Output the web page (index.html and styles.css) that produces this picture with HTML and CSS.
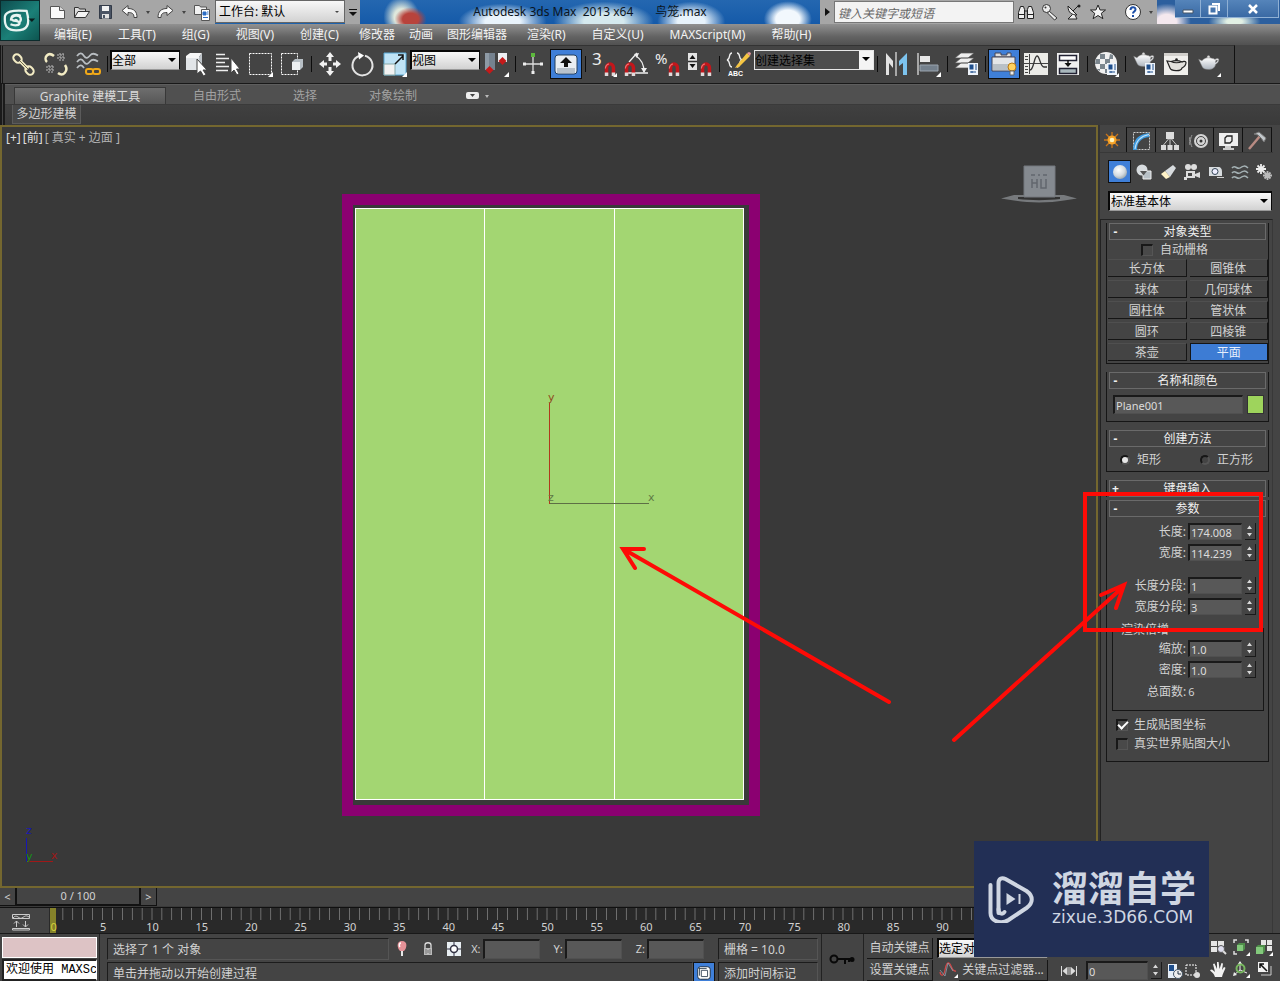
FILE: index.html
```html
<!DOCTYPE html>
<html lang="zh-CN">
<head>
<meta charset="utf-8">
<title>Autodesk 3ds Max 2013 x64 鸟笼.max</title>
<link rel="stylesheet" href="styles.css">
</head>
<body>
<svg class="defs" aria-hidden="true">
  <defs>
    <linearGradient id="metal" x1="0" y1="0" x2="0" y2="1"><stop offset="0" stop-color="#fff"/><stop offset="1" stop-color="#aeb6c0"/></linearGradient>
    <radialGradient id="ball" cx=".4" cy=".35" r=".7"><stop offset="0" stop-color="#fff"/><stop offset=".6" stop-color="#d4dbe0"/><stop offset="1" stop-color="#98a4ac"/></radialGradient>
    <symbol id="magnet" viewBox="0 0 12 13"><path d="M3 12.500V6a3 3.500 0 0 1 6 0v6.500" fill="none" stroke="#c3161b" stroke-width="3"/><path d="M3 13v-3M9 13v-3" stroke="#dcdcdc" stroke-width="3"/><path d="M2 6.500a4.400 4.400 0 0 1 3-4" fill="none" stroke="#f07070"/></symbol>
    <symbol id="corner" viewBox="0 0 5 5"><path d="M5 0v5H0z" fill="#fff"/></symbol>
    <symbol id="teapot" viewBox="0 0 24 16"><path d="M5 6 1.500 4.500 5 12c1 2.500 3 3.500 7 3.500s7-2 7.500-5.500c2-1 3.500-3 3.500-5 0-1.500-3-1.500-4-.3C17 3.500 14 3 12 3S7 3.500 5 6zm14.500 2c0-2 .5-2.800 1.600-2.800 1 0 0 2.300-1.600 2.800z" fill="url(#metal)" stroke="#777" stroke-width=".5"/><path d="M9 3.500c1-1 5-1 6 0z" fill="#ddd"/><circle cx="12" cy="1.700" r="1.300" fill="#ddd"/></symbol>
    <symbol id="dialog" viewBox="0 0 10 12"><path d="M0 0h10v12H0z" fill="#eef4fb"/><path d="M1.500 1.500h4v5h-4z" fill="#1e4e8c"/><path d="M7 2h2M7 4h2M7 6h2M2 9h6M4 8v2" stroke="#1e4e8c"/></symbol>
    <symbol id="updown" viewBox="0 0 9 15"><path d="M4.500 2 7 5.500H2zM4.500 13 7 9.500H2z" fill="#d8d8d8"/></symbol>
  </defs>
</svg>

<header class="header">
  <button class="logo" aria-label="应用程序">
    <svg viewBox="0 0 40 41"><path d="M4 19C3 11 12 9 27 10.500 31 25 28 31 16 31 7 31 4 27 4 19z" fill="none" stroke="#e8f4f2" stroke-width="2.400"/><path d="M21 15.500c-6-2-10.500 0-10 3.500.5 3 8 1 8.500 4 .4 2.500-4.500 3.500-9.500 1.500M18.500 23c4-3 3-8-3-7.500-3 .4-5.500 2.500-5 5M14.500 20.500c1.500-1.500 3 0 2 1.700" fill="none" stroke="#e8f4f2" stroke-width="2.400"/><path d="M29 18.500h7L32.500 22z" fill="#0a1c1c"/></svg>
  </button>
  <div class="header-rows">
    <div class="titlebar">
      <div class="quick">
        <button aria-label="新建"><svg viewBox="0 0 18 18"><path d="M1.500 3.500h9l5 4v8h-14z" fill="#fafafa" stroke="#555"/><path d="M10.500 3.500v4h5" fill="#ddd" stroke="#555"/></svg></button>
        <button aria-label="打开"><svg viewBox="0 0 18 18"><path d="M1.500 14.500v-10h4l1 1.500h6v2.500" fill="#ddd" stroke="#333"/><path d="M1.500 14.500 5 8.500h11.500l-4 6z" fill="#f4f4f4" stroke="#333"/></svg></button>
        <button aria-label="保存"><svg viewBox="0 0 18 18"><path d="M2.500 2.500h12v13h-12z" fill="#4a5464" stroke="#333b48"/><path d="M5 3h7v5H5z" fill="#f2f2f2"/><path d="M5 11h7v4.500H5z" fill="#e2e2e2"/><path d="M6 12h2v3H6z" fill="#4a5464"/></svg></button>
        <button aria-label="撤消"><svg viewBox="0 0 18 18"><path d="M1 7.500 7 2.500v3c6 0 9 3 9 9h-3c0-4-2-5-6-5v3z" fill="#fafafa" stroke="#444"/></svg></button>
        <i class="drop"></i>
        <button aria-label="重做"><svg viewBox="0 0 18 18"><path d="M16 7.500 10 2.500v3c-6 0-9 3-9 9h3c0-4 2-5 6-5v3z" fill="#fafafa" stroke="#444"/></svg></button>
        <i class="drop"></i>
        <button aria-label="项目"><svg viewBox="0 0 18 18"><path d="M1.500 11.500v-9h5l1 1.500h6v7.500z" fill="#f2f2f2" stroke="#555"/><path d="M8.500 6.500h8v11h-8z" fill="#fff" stroke="#555"/><path d="M10 9h3v3h-3zM14 9h1.500M14 11h1.500M10 14.500h5" stroke="#2b6cc4" fill="#2b6cc4"/></svg></button>
      </div>
      <label class="pick pick-workspace"><select aria-label="工作台"><option>工作台: 默认</option></select></label>
      <button class="more" aria-label="更多"></button>
      <h1 class="doc-title">Autodesk 3ds Max  2013 x64       鸟笼.max</h1>
      <div class="infocenter">
        <i class="play"></i>
        <input class="search" type="text" placeholder="键入关键字或短语" aria-label="搜索">
        <button aria-label="查找"><svg viewBox="0 0 18 18"><path d="M3.500 3.500h3l1 3v9H1.500v-6zM11.500 3.500h3l2 6v6h-6v-9z" fill="#eee" stroke="#222"/><path d="M7.500 8h3M1.500 11.500h6M10.500 11.500h6" stroke="#222"/></svg></button>
        <button aria-label="密钥"><svg viewBox="0 0 18 18"><path d="m8 8 8 7-2.500 2-7-7z" fill="#eee" stroke="#333"/><circle cx="5.500" cy="5.500" r="4" fill="#eee" stroke="#333"/><circle cx="4.500" cy="4.500" r="1" fill="#333"/></svg></button>
        <button aria-label="通讯中心"><svg viewBox="0 0 18 18"><path d="M3 3c0 7 4 9 9 9z" fill="#eee" stroke="#222"/><path d="m8 8 6-6M7 12l-4 4h9l-2-4" fill="#eee" stroke="#222"/><circle cx="14" cy="3" r="1.500" fill="#222"/></svg></button>
        <button aria-label="收藏夹"><svg viewBox="0 0 18 18"><path d="m9 2 2.100 5h5.400l-4.200 3.300 1.600 5.400L9 12.500l-4.900 3.200 1.600-5.400L1.500 7h5.400z" fill="#f4f4f4" stroke="#222"/></svg></button>
        <button class="help" aria-label="帮助"><svg viewBox="0 0 18 18"><circle cx="9" cy="9" r="7.500" fill="#fff" stroke="#333"/><path d="M6.500 7c0-3.500 5-3.500 5-.5 0 2-2.500 2-2.500 4M9 12v2" fill="none" stroke="#1d4fa8" stroke-width="2"/></svg></button>
        <i class="drop"></i>
      </div>
      <div class="winctl">
        <button aria-label="最小化"><svg viewBox="0 0 16 14"><path d="M3 8h10v3H3z" fill="#fff" stroke="#456"/></svg></button>
        <button aria-label="还原"><svg viewBox="0 0 16 14"><path d="M6 2h7v7M3.500 4.500h7v7h-7z" fill="none" stroke="#fff" stroke-width="2"/></svg></button>
        <button class="close" aria-label="关闭"><svg viewBox="0 0 16 14"><path d="m4 3 8 8M12 3l-8 8" stroke="#fff" stroke-width="2.500"/></svg></button>
      </div>
    </div>
    <nav class="menubar">
      <a href="#">编辑(E)</a><a href="#">工具(T)</a><a href="#">组(G)</a><a href="#">视图(V)</a><a href="#">创建(C)</a><a class="tight" href="#">修改器</a><a class="tight" href="#">动画</a><a class="tight" href="#">图形编辑器</a><a href="#">渲染(R)</a><a href="#">自定义(U)</a><a href="#">MAXScript(M)</a><a href="#">帮助(H)</a>
    </nav>
  </div>
</header>

<div class="toolrow">
<div class="toolbar" role="toolbar" aria-label="主工具栏">
  <button class="tool" aria-label="选择并链接"><svg viewBox="0 0 26 26"><g fill="none" stroke="#f3ecc4" stroke-width="2"><rect x="2" y="4" width="9" height="7" rx="3.500" transform="rotate(45 6.500 7.500)"/><rect x="14" y="16" width="9" height="7" rx="3.500" transform="rotate(45 18.500 19.500)"/><path d="m9 10 8 8" stroke-width="3.500"/></g><path d="m9 10 8 8" stroke="#6d684e"/></svg></button>
  <button class="tool" aria-label="断开链接"><svg viewBox="0 0 26 26"><path d="M4 11C0 7 5 0 11 5M15 22c5 4 11-2 7-8" fill="none" stroke="#f3ecc4" stroke-width="2.500"/><g stroke="#bbb" stroke-dasharray="2 1"><path d="M14 4h7M14 7h8M17 2v8M20 2v8M3 16h8M3 19h8M6 14v8M9 14v8"/></g></svg></button>
  <button class="tool" aria-label="绑定到空间扭曲"><svg viewBox="0 0 26 26"><g fill="none" stroke="#b9bec2" stroke-width="1.800"><path d="M2 5c3-4 5-3 7 0s4 2 6-.5 5-2 8 0M2 11c3-4 5-3 7 0s4 2 6-.5 5-2 8 0M2 17c3-4 5-3 7 0"/></g><rect x="11" y="18" width="7" height="5" rx="2" fill="none" stroke="#f0a818" stroke-width="2"/><rect x="18" y="18" width="7" height="5" rx="2" fill="none" stroke="#f0a818" stroke-width="2"/></svg></button>
  <i class="sep"></i>
  <label class="pick pick-small"><select aria-label="选择过滤器"><option>全部</option></select></label>
  <button class="tool" aria-label="选择对象"><svg viewBox="0 0 26 26"><path d="m3 5 4-3h12l-3 4v13H3z" fill="#f7f7f7"/><path d="M16 6l3-4v13l-3 4z" fill="#bfc5ca"/><path d="M3 19V7h13v12z" fill="#e2e5e8"/><path d="M14 8v15l3.500-3 3 5 2.500-1.500-3-4.500h4z" fill="#fff" stroke="#444"/></svg></button>
  <button class="tool" aria-label="按名称选择"><svg viewBox="0 0 26 26"><path d="M1 3.500h9M1 7.500h13M1 11.500h9M1 15.500h13M1 19.500h12" stroke="#eee" stroke-width="1.300"/><path d="M16 7v15l3-3 3 5 2-1.500-2.500-4.500H25z" fill="#fff" stroke="#444"/></svg></button>
  <button class="tool" aria-label="矩形选择区域"><svg viewBox="0 0 26 26"><path d="M2.500 2.500h22v21h-22z" fill="none" stroke="#fff" stroke-dasharray="2 1"/><use href="#corner" x="21" y="21" width="5" height="5"/></svg></button>
  <button class="tool" aria-label="窗口/交叉"><svg viewBox="0 0 26 26"><path d="M2.500 2.500h16v21h-16z" fill="none" stroke="#fff" stroke-dasharray="2 1"/><path d="m13 11 3-3h8v8l-3 3h-8z" fill="#b8c0c6"/><path d="M13 11h8v8h-8z" fill="#eceff1"/></svg></button>
  <i class="sep"></i>
  <button class="tool" aria-label="移动"><svg viewBox="0 0 26 26"><path d="m13 1 4 5H9zM13 25l4-5H9zM2 13l5-4v8zM24 13l-5-4v8z" fill="#f2f2f2"/><path d="M13 6v4M13 16v4M7 13h3M16 13h3" stroke="#f2f2f2" stroke-width="3"/></svg></button>
  <button class="tool" aria-label="旋转"><svg viewBox="0 0 26 26"><path d="M10 5a10 10 0 1 0 6-.3" fill="none" stroke="#e4e4e4" stroke-width="2"/><path d="m9 1 6 3.500-5 4z" fill="#fff"/></svg></button>
  <button class="tool" aria-label="缩放"><svg viewBox="0 0 26 26"><path d="M3 2h22v22H3z" fill="#bfe3f6" stroke="#59a8d4"/><path d="M3 13h11v11H3z" fill="#f2f2f2" stroke="#8aa"/><path d="m14 13 8-8M17 4h5v5" fill="none" stroke="#111" stroke-width="1.500"/><use href="#corner" x="21" y="21" width="5" height="5"/></svg></button>
  <label class="pick pick-small"><select aria-label="参考坐标系"><option>视图</option></select></label>
  <button class="tool" aria-label="使用轴点中心"><svg viewBox="0 0 26 26"><path d="M2 2h10v17H2z" fill="#75828f"/><path d="M2 2h4v17H2z" fill="#8e9aa5"/><path d="M15 2h9v9h-9z" fill="#eceff2"/><path d="m6.500 15 4 4-4 4-4-4zM19.500 6l4 4-4 4-4-4z" fill="#c41a1a"/><use href="#corner" x="21" y="21" width="5" height="5"/></svg></button>
  <i class="sep"></i>
  <button class="tool" aria-label="选择并操纵"><svg viewBox="0 0 26 26"><path d="M12 6v14M4 13h16" stroke="#ddd" stroke-width="1.300"/><path d="M10 2h4v4h-4z" fill="#5cb83c"/><path d="M2 11.500h3v3H2zM19 11.500h3v3h-3zM10.500 20h3v3h-3z" fill="#eee"/></svg></button>
  <button class="tool tool-on" aria-label="键盘快捷键覆盖切换"><svg viewBox="0 0 26 26"><rect x="2" y="4" width="22" height="19" rx="3" fill="#e9eef3" stroke="#24405f"/><path d="M4 17h18v5H4z" fill="#b8c2cc"/><path d="m13 6 6 6h-4v4h-4v-4H7z" fill="#111"/></svg></button>
  <i class="sep"></i>
  <button class="tool" aria-label="捕捉开关"><svg viewBox="0 0 26 26"><text class="t-snap" x="1" y="14">3</text><use href="#magnet" x="12" y="10" width="14" height="15"/><use href="#corner" x="22" y="22" width="4" height="4"/></svg></button>
  <button class="tool" aria-label="角度捕捉"><svg viewBox="0 0 26 26"><path d="M3 22h22M6 11l8-9M13 5c5 3 8 8 8 16" fill="none" stroke="#eee" stroke-width="1.300"/><path d="m11 3 5-1-2 5zM18 17l6 0-3 5z" fill="#eee"/><use href="#magnet" x="0" y="10" width="14" height="15"/></svg></button>
  <button class="tool" aria-label="百分比捕捉"><svg viewBox="0 0 26 26"><text class="t-snap t-pct" x="0" y="13">%</text><use href="#magnet" x="12" y="10" width="14" height="15"/></svg></button>
  <button class="tool" aria-label="微调器捕捉"><svg viewBox="0 0 26 26"><path d="M1 2h9v17H1z" fill="#e4e4e4"/><path d="M1 10.500h9" stroke="#333" stroke-width="1.500"/><path d="m5.500 4 3 4h-6zM5.500 17l3-4h-6z" fill="#111"/><use href="#magnet" x="12" y="10" width="14" height="15"/></svg></button>
  <i class="sep"></i>
  <button class="tool" aria-label="编辑命名选择集"><svg viewBox="0 0 26 26"><path d="M7 2C3 2 6 8 2 9c4 1 1 7 5 7M12 2c4 0 1 6 5 7-4 1-1 7-5 7" fill="none" stroke="#eee" stroke-width="1.300"/><path d="M12 14 22 2l3 3-11 11-4 1z" fill="#f5c542"/><path d="m22 2 3 3 1-3-2-1z" fill="#e89aa0"/><text class="t-abc" x="3" y="25">ABC</text></svg></button>
  <label class="pick pick-set"><select aria-label="命名选择集"><option>创建选择集</option></select></label>
  <i class="sep"></i>
  <button class="tool" aria-label="镜像"><svg viewBox="0 0 26 26"><path d="M3 2v22h3V12l4 5V10z" fill="#e2e2e2"/><path d="M24 2v22h-4V12l-4 3v-5z" fill="#7cc3ee"/><path d="M13 1v24" stroke="#ddd" stroke-width="1.300"/></svg></button>
  <button class="tool" aria-label="对齐"><svg viewBox="0 0 26 26"><path d="M3 2v22" stroke="#ddd" stroke-width="1.300"/><path d="M5 5h10v6H5z" fill="#e8e8e8"/><path d="M5 14h18v6H5z" fill="#74808c" stroke="#9aa4ae"/><use href="#corner" x="21" y="21" width="5" height="5"/></svg></button>
  <i class="sep"></i>
  <button class="tool" aria-label="层管理器"><svg viewBox="0 0 26 26"><path d="M2 17 8 12h13l-6 5zM2 12l6-5h13l-6 5zM2 7l6-5h13l-6 5z" fill="#eee" stroke="#555" stroke-width=".7"/><use href="#dialog" x="15" y="12" width="10" height="12"/></svg></button>
  <i class="sep"></i>
  <button class="tool tool-on" aria-label="Graphite 建模工具"><svg viewBox="0 0 26 26"><path d="M4 2h6v2h6V2h4v4H4z" fill="#ddd" stroke="#445"/><path d="M1 6h23v14H1z" fill="#e4e6e8" stroke="#445"/><path d="M2 13h21v6H2z" fill="#b9c0c6"/><circle cx="21" cy="16" r="4" fill="#ffd25e" stroke="#b87812"/><path d="M19 20h4v4h-4z" fill="#eee" stroke="#666"/></svg></button>
  <button class="tool" aria-label="曲线编辑器"><svg viewBox="0 0 26 26"><path d="M1 2h24v22H1z" fill="#ecece8"/><path d="M6.500 3v20M1 12.500h24M2 5.500h3M2 8.500h3M2 15.500h3M2 18.500h3M2 21.500h3" stroke="#444"/><path d="M7 19c4 0 4-14 7-14s3 11 7 11h3" fill="none" stroke="#333" stroke-width="1.300"/></svg></button>
  <button class="tool" aria-label="图解视图"><svg viewBox="0 0 26 26"><path d="M2 2h22v22H2z" fill="#f0f0f0"/><path d="M4.500 4.500h17v5h-17z" fill="#fff" stroke="#223" stroke-width="1.500"/><path d="M4.500 17.500h17v5h-17z" fill="#a9b8bd" stroke="#223" stroke-width="1.500"/><path d="M13 9v4" stroke="#111" stroke-width="1.500"/><path d="M9.500 12h7L13 16z" fill="#111"/></svg></button>
  <i class="sep"></i>
  <button class="tool" aria-label="材质编辑器"><svg viewBox="0 0 26 26"><circle cx="13" cy="12" r="11" fill="#f1f1f1"/><path d="M7 3h5v5H7zM17 3l3 1v4h-4zM3 8h4v5H2zM12 8h5v5h-5zM7 13h5v5H7zM17 13h5v4h-5zM12 18h5v4h-5zM3 18h4v2z" fill="#7b868e"/><use href="#dialog" x="14" y="12" width="10" height="12"/><use href="#corner" x="22" y="22" width="4" height="4"/></svg></button>
  <i class="sep"></i>
  <button class="tool" aria-label="渲染设置"><svg viewBox="0 0 26 26"><use href="#teapot" x="1" y="1" width="23" height="15"/><use href="#dialog" x="14" y="12" width="10" height="12"/></svg></button>
  <button class="tool" aria-label="渲染帧窗口"><svg viewBox="0 0 26 26"><path d="M1 2h24v22H1z" fill="#f0efec"/><path d="M1 2h24v3H1z" fill="#d2d0cc"/><path d="M8 10.500 4 10l3 7c1 3 11 4 12 0 2-1 4-3 4-5.500 0-1.500-3-1.500-4-.5-3-1.500-8-1.500-11-.5zM8 10.500c3 1.500 8 1.500 11 0" fill="#e2e0dc" stroke="#222" stroke-width="1.200"/><circle cx="13.500" cy="8.500" r="1.300" fill="#222"/></svg></button>
  <button class="tool" aria-label="渲染产品"><svg viewBox="0 0 26 26"><use href="#teapot" x="2" y="4" width="23" height="15"/><use href="#corner" x="22" y="22" width="4" height="4"/></svg></button>
</div>
</div>

<section class="ribbon">
  <div class="ribbon-tabs">
    <button class="rtab rtab-on">Graphite 建模工具</button>
    <button class="rtab">自由形式</button>
    <button class="rtab rtab-short">选择</button>
    <button class="rtab">对象绘制</button>
    <button class="rmin" aria-label="最小化"><svg viewBox="0 0 26 10"><rect x="1" y="1" width="13" height="7" rx="2" fill="#eee"/><path d="M5 3h5L7.500 6z" fill="#444"/><path d="M20 4h4l-2 3z" fill="#bbb"/></svg></button>
  </div>
  <div class="ribbon-panel"><button class="rpanel">多边形建模</button></div>
</section>

<main class="main">
  <div class="work">
    <section class="viewport" aria-label="前视图">
      <svg class="scene" viewBox="0 0 1094 759">
        <rect x="345.500" y="72.500" width="407" height="611" fill="none" stroke="#8b0071" stroke-width="11"/>
        <rect x="353.500" y="81.500" width="388" height="591" fill="#a3d672" stroke="#fff"/>
        <path d="M482.500 82v590M612.500 82v590" stroke="#fff"/>
        <path d="M547 376.500h100" stroke="#5d6f45"/><path d="M547.500 276v101" stroke="#b03a1c"/>
        <text class="t-axis" x="546" y="274" fill="#8f4a20">y</text><text class="t-axis" x="546" y="374" fill="#5f7a45">z</text><text class="t-axis" x="646" y="374" fill="#5f7a45">x</text>
        <path d="M24.500 711v24" stroke="#1717b4"/><path d="M25 734.500h26" stroke="#a01818"/>
        <text class="t-axis" x="24" y="707" fill="#1717b4">z</text><text class="t-axis" x="24" y="733" fill="#189018">y</text><text class="t-axis" x="49" y="732" fill="#a01818">x</text>
      </svg>
      <p class="vlabel"><span>[+]</span><span>[前]</span><span class="dim">[ 真实 + 边面 ]</span></p>
      <svg class="cube" viewBox="0 0 78 38"><path d="M1 33.500 14 30h50l13 3.500-13 2C50 38 28 38 14 35.500z" fill="#777a7d"/><path d="M18 32h42v2c-12 1.500-30 1.500-42 0z" fill="#333"/><path d="M24 1h31v31H24z" fill="#858a90" stroke="#74797f"/><path d="M31 10h4M38 10h2M43 10h4M32 14v9M32 18h5M37 14v9M41 14v9h5v-9" fill="none" stroke="#62676d" stroke-width="1.500"/></svg>
    </section>
    <div class="slider">
      <button class="step" aria-label="上一帧">&lt;</button><button class="thumb">0 / 100</button><button class="step" aria-label="下一帧">&gt;</button>
    </div>
    <div class="track">
      <button class="mini" aria-label="迷你曲线编辑器"><svg viewBox="0 0 18 18"><path d="M.5 1.500h17v4H.5zM.5 15.500h17v1.500H.5z" fill="none" stroke="#ccc"/><path d="M1 5c4-5 6 2 9 0s4-3 7-1" fill="none" stroke="#ccc"/><path d="M4.500 14V8M2 10.500 4.500 8 7 10.500M13.500 8v6M11 11.500l2.500 2.500 2.500-2.500" fill="none" stroke="#ccc"/></svg></button>
      <ol class="frames">
        <li class="now">0</li><li>5</li><li>10</li><li>15</li><li>20</li><li>25</li><li>30</li><li>35</li><li>40</li><li>45</li><li>50</li><li>55</li><li>60</li><li>65</li><li>70</li><li>75</li><li>80</li><li>85</li><li>90</li><li>95</li><li>100</li>
      </ol>
    </div>
  </div>

  <aside class="panel">
    <div class="ptabs">
      <button class="ptab ptab-on" aria-label="创建"><svg viewBox="0 0 20 20"><path d="M10 2v16M2 10h16M4 4l12 12M16 4 4 16" stroke="#c9751c" stroke-width="1.300"/><circle cx="10" cy="10" r="4.500" fill="#f7a428"/><circle cx="10" cy="10" r="2.300" fill="#fff5c0"/></svg></button>
      <button class="ptab" aria-label="修改"><svg viewBox="0 0 20 20"><path d="M2.500 1.500h16v17h-16z" fill="none" stroke="#ccc" stroke-dasharray="2 1"/><path d="M4 19C4 10 9 5 18 4" fill="none" stroke="#3f9be0" stroke-width="4"/><path d="M4 18C5 10 10 5 18 3.500" fill="none" stroke="#bfe2fa" stroke-width="1.200"/></svg></button>
      <button class="ptab" aria-label="层次"><svg viewBox="0 0 20 20"><path d="M6 1h8v7H6zM1 14h5v5H1zM7.500 14h5v5h-5zM14 14h5v5h-5z" fill="#dcdcdc"/><path d="M10 8v6M3.500 14l5-6M16.500 14l-5-6" fill="none" stroke="#ccc"/></svg></button>
      <button class="ptab" aria-label="运动"><svg viewBox="0 0 20 20"><circle cx="12" cy="10" r="7" fill="#d5d5d5"/><circle cx="12" cy="10" r="4.500" fill="none" stroke="#444"/><circle cx="12" cy="10" r="1.500" fill="#333"/><path d="M3 4c-2 4-2 8 0 12M1 6c-1 3-1 6 0 8" fill="none" stroke="#999"/></svg></button>
      <button class="ptab" aria-label="显示"><svg viewBox="0 0 20 20"><path d="M1 2h19v13H1z" fill="#eee"/><path d="M7 15h6v2h3v2H5v-2h2z" fill="#ccc"/><path d="M7 7l2-2h5v5l-2 2H7z" fill="none" stroke="#222" stroke-width="1.300"/></svg></button>
      <button class="ptab" aria-label="工具"><svg viewBox="0 0 20 20"><path d="M13 5 2 18" stroke="#b98b83" stroke-width="2.500"/><path d="m7 3 5-2 7 6-2 4-3-4-3-3z" fill="#c3c8cc" stroke="#777"/></svg></button>
    </div>
    <div class="cats">
      <button class="cat cat-on" aria-label="几何体"><svg viewBox="0 0 18 18"><circle cx="9" cy="9" r="7" fill="url(#ball)"/></svg></button>
      <button class="cat" aria-label="图形"><svg viewBox="0 0 18 18"><circle cx="7" cy="7" r="5.500" fill="#d8dcdf"/><path d="M8 8h8v8H8z" fill="#b8c0c6" stroke="#eee"/><path d="m5 8 7 0-3.500 4.500z" fill="#555"/></svg></button>
      <button class="cat" aria-label="灯光"><svg viewBox="0 0 18 18"><path d="M14 2 6 8l5 6 6-9z" fill="#d8dcdf"/><path d="m6 8-4 3 5 5 4-2z" fill="#fff3c8"/></svg></button>
      <button class="cat" aria-label="摄影机"><svg viewBox="0 0 18 18"><circle cx="5" cy="4" r="3" fill="#ddd"/><circle cx="11" cy="4" r="3" fill="#ddd"/><path d="M3 8h9v7H3zM12 11l5-2v6l-5-2zM1 14h3v3H1z" fill="#ddd"/><path d="M5 10h4v3H5z" fill="#444"/></svg></button>
      <button class="cat" aria-label="辅助对象"><svg viewBox="0 0 18 18"><path d="M2 4h9c3 0 4 2 4 5v4H2z" fill="#d8dcdf"/><circle cx="8" cy="8.500" r="3" fill="#eef" stroke="#345"/><path d="M10 14.500h7" stroke="#ccc"/></svg></button>
      <button class="cat" aria-label="空间扭曲"><svg viewBox="0 0 18 18"><path d="M1 5c3-4 5 2 8 0s5-3 8 0M1 10c3-4 5 2 8 0s5-3 8 0M1 15c3-4 5 2 8 0s5-3 8 0" fill="none" stroke="#a5b2b5" stroke-width="1.500"/></svg></button>
      <button class="cat" aria-label="系统"><svg viewBox="0 0 18 18"><g stroke="#eee" stroke-width="1.800"><path d="M6 1v10M1 6h10M2.500 2.500l7 7M9.500 2.500l-7 7"/></g><g stroke="#bbb" stroke-width="1.800"><path d="M12.500 8v9M8 12.500h9M9.500 9.500l6 6M15.500 9.500l-6 6"/></g></svg></button>
    </div>
    <label class="pick pick-kind"><select aria-label="类别"><option>标准基本体</option></select></label>
    <div class="rolls">
      <section class="roll">
        <button class="roll-head"><b>-</b>对象类型</button>
        <label class="check auto"><input type="checkbox">自动栅格</label>
        <div class="kinds">
          <button>长方体</button><button>圆锥体</button>
          <button>球体</button><button>几何球体</button>
          <button>圆柱体</button><button>管状体</button>
          <button>圆环</button><button>四棱锥</button>
          <button>茶壶</button><button class="kind-on">平面</button>
        </div>
      </section>
      <section class="roll">
        <button class="roll-head"><b>-</b>名称和颜色</button>
        <div class="name-row"><input class="field" type="text" value="Plane001" aria-label="名称"><button class="swatch" aria-label="对象颜色"></button></div>
      </section>
      <section class="roll">
        <button class="roll-head"><b>-</b>创建方法</button>
        <div class="radios"><label><input type="radio" name="method" checked>矩形</label><label><input type="radio" name="method">正方形</label></div>
      </section>
      <section class="roll roll-closed">
        <button class="roll-head"><b>+</b>键盘输入</button>
      </section>
      <section class="roll">
        <button class="roll-head"><b>-</b>参数</button>
        <div class="params">
          <div class="param"><label for="len">长度:</label><input id="len" class="field" type="text" value="174.008"><button class="spin" aria-label="调整长度"><svg viewBox="0 0 9 15"><use href="#updown"/></svg></button></div>
          <div class="param"><label for="wid">宽度:</label><input id="wid" class="field" type="text" value="114.239"><button class="spin" aria-label="调整宽度"><svg viewBox="0 0 9 15"><use href="#updown"/></svg></button></div>
          <div class="param param-gap"><label for="lseg">长度分段:</label><input id="lseg" class="field" type="text" value="1"><button class="spin" aria-label="调整长度分段"><svg viewBox="0 0 9 15"><use href="#updown"/></svg></button></div>
          <div class="param"><label for="wseg">宽度分段:</label><input id="wseg" class="field" type="text" value="3"><button class="spin" aria-label="调整宽度分段"><svg viewBox="0 0 9 15"><use href="#updown"/></svg></button></div>
        </div>
        <div class="group">
          <h2 class="group-title">渲染倍增</h2>
          <div class="param"><label for="scale">缩放:</label><input id="scale" class="field" type="text" value="1.0"><button class="spin" aria-label="调整缩放"><svg viewBox="0 0 9 15"><use href="#updown"/></svg></button></div>
          <div class="param"><label for="dens">密度:</label><input id="dens" class="field" type="text" value="1.0"><button class="spin" aria-label="调整密度"><svg viewBox="0 0 9 15"><use href="#updown"/></svg></button></div>
          <p class="total"><span>总面数:</span><span class="num">6</span></p>
        </div>
        <div class="checks">
          <label class="check"><input type="checkbox" checked>生成贴图坐标</label>
          <label class="check"><input type="checkbox">真实世界贴图大小</label>
        </div>
      </section>
    </div>
  </aside>
</main>

<footer class="status">
  <div class="listener">
    <input class="macro" type="text" aria-label="宏录制器"><input class="script" type="text" value="欢迎使用 MAXScript" aria-label="侦听器">
  </div>
  <div class="info">
    <div class="info-row">
      <p class="cell grow">选择了 1 个 对象</p>
      <button class="sicon" aria-label="孤立"><svg viewBox="0 0 18 18"><path d="M9 1c6 0 5 7 2 10H7C4 8 3 1 9 1z" fill="#e59298"/><path d="M8 3c-2 0-2 3-1 4" stroke="#fff" stroke-width="1.500" fill="none"/><path d="M8 11h2v5H8z" fill="#e8e8e8"/></svg></button>
      <button class="sicon" aria-label="选择锁定"><svg viewBox="0 0 18 18"><path d="M6 8V5c0-3 6-3 6 0v3" fill="none" stroke="#ddd" stroke-width="1.300"/><path d="M5 8h8v7H5z" fill="#bbb"/><path d="M9 10v3M11 9v5M7 9v5" stroke="#777"/></svg></button>
      <button class="sicon" aria-label="绝对模式"><svg viewBox="0 0 18 18"><path d="M2 2h14v14H2z" fill="#e8eef2"/><circle cx="9" cy="9" r="3.500" fill="#fff" stroke="#334" stroke-width="1.500"/><path d="M9 2v3M9 13v3M2 9h3M13 9h3" stroke="#334"/></svg></button>
      <label class="coord">X:<input class="field" type="text"></label>
      <label class="coord">Y:<input class="field" type="text"></label>
      <label class="coord">Z:<input class="field" type="text"></label>
      <p class="cell side">栅格 = 10.0</p>
    </div>
    <div class="info-row">
      <p class="cell grow">单击并拖动以开始创建过程</p>
      <button class="iso" aria-label="自适应降级"><svg viewBox="0 0 18 18"><rect x="2" y="2" width="14" height="14" rx="3" fill="#fff" stroke="#123"/><path d="M6 6h7v7H6zM3 4h9M4 3v9" fill="#fff" stroke="#345"/></svg></button>
      <p class="cell side">添加时间标记</p>
    </div>
  </div>
  <button class="key" aria-label="设置关键点"><svg viewBox="0 0 28 14"><circle cx="6" cy="7" r="3.500" fill="none" stroke="#080808" stroke-width="2"/><path d="M9.500 7H24M17 7v5M21 7v3" stroke="#080808" stroke-width="2"/><circle cx="24" cy="7.500" r="2.500" fill="#080808"/></svg></button>
  <div class="keys">
    <button class="kbtn">自动关键点</button><label class="pick pick-key"><select aria-label="关键点集"><option>选定对象</option></select></label>
    <button class="kbtn">设置关键点</button>
    <div class="kfilter"><svg viewBox="0 0 22 18"><path d="M3 12c1 5 4 4 5-2s3-9 5-6 2 8 6 7" fill="none" stroke="#d04848" stroke-width="1.300"/><path d="M3 10l5 6 3-13 5 8" fill="none" stroke="#9ab" stroke-width=".7"/><use href="#corner" x="17" y="14" width="4" height="4"/></svg><button class="kbtn">关键点过滤器...</button></div>
  </div>
  <div class="play-ctl">
    <button class="sicon" aria-label="关键点模式"><svg viewBox="0 0 18 18"><path d="M1.500 4v10M16.500 4v10M8 5v8M10 5v8" stroke="#ddd"/><path d="M2.500 9 7 5v8zM15.500 9 11 5v8z" fill="#ddd"/></svg></button>
    <input class="field" type="text" value="0" aria-label="当前帧"><button class="spin" aria-label="调整帧"><svg viewBox="0 0 9 15"><use href="#updown"/></svg></button>
    <button class="sicon" aria-label="时间配置"><svg viewBox="0 0 18 18"><path d="M2 2h9v14H2z" fill="#e6eef7"/><path d="M3 3h5v6H3z" fill="#1e4e8c"/><circle cx="12" cy="12" r="4.500" fill="#eee" stroke="#456"/><path d="M12 9v3h3" fill="none" stroke="#234"/></svg></button>
    <button class="sicon" aria-label="缩放区域"><svg viewBox="0 0 18 18"><path d="M2 3h10v10H2z" fill="none" stroke="#fff" stroke-dasharray="2 1"/><circle cx="13" cy="13" r="3" fill="#ddd"/></svg></button>
  </div>
  <div class="nav">
    <button class="sicon" aria-label="缩放所有视图"><svg viewBox="0 0 18 18"><path d="M2 3h6v5H2zM9 3h6v5H9zM2 9h6v5H2z" fill="#e4e4e4"/><circle cx="12" cy="11" r="3.500" fill="#dde" stroke="#555"/><path d="m14 13 3 3" stroke="#ddd" stroke-width="2"/></svg></button>
    <button class="sicon" aria-label="最大化显示"><svg viewBox="0 0 18 18"><path d="M2 5V2h3M13 2h3v3M2 13v3h3" fill="none" stroke="#ddd" stroke-width="1.500"/><path d="M5 7l2-2h6v6l-2 2H5z" fill="#4f8f4a"/><path d="M5 7h6v6H5z" fill="#83c97c"/><use href="#corner" x="14" y="14" width="4" height="4"/></svg></button>
    <button class="sicon" aria-label="所有视图最大化"><svg viewBox="0 0 18 18"><path d="M6 2h5v5H6zM12 2h5v5h-5zM12 8h5v5h-5z" fill="#e4e4e4"/><path d="M1 9l2-2h7v6l-2 3H1z" fill="#4f8f4a"/><path d="M1 9h7v7H1z" fill="#83c97c"/><use href="#corner" x="14" y="14" width="4" height="4"/></svg></button>
    <button class="sicon" aria-label="平移"><svg viewBox="0 0 18 18"><path d="M6 17c-1-4-4-5-5-7l2-.5L6 12 4 4l1.500-.5L8 9 8 2h1.600L10.500 9 12.500 3l1.500.5L13 10l2-3 1.500.7C15 12 14 13 13 17z" fill="#f2f2f2"/></svg></button>
    <button class="sicon" aria-label="环绕"><svg viewBox="0 0 18 18"><path d="M8 2v8L2 15M8 10l7 3" stroke="#eee" fill="none"/><path d="m8 1 2 3H6zM1 16l1-4 3 3z" fill="#eee"/><circle cx="8.500" cy="8.500" r="4" fill="none" stroke="#77b85f" stroke-width="2"/><use href="#corner" x="14" y="14" width="4" height="4"/></svg></button>
    <button class="sicon" aria-label="最大化视口切换"><svg viewBox="0 0 18 18"><path d="M3 2h10v10H3z" fill="#f2f2f2"/><path d="M6 15h10V6" stroke="#ccc" fill="none"/><path d="m5 4 7 7M5 8V4h4" stroke="#111" stroke-width="1.500" fill="none"/></svg></button>
  </div>
</footer>

<svg class="marks" viewBox="0 0 320 300" aria-hidden="true"><path d="M125 42h176v136H125z" fill="none" stroke="#fe0b06" stroke-width="4"/></svg>
<svg class="arrows" viewBox="0 0 520 210" aria-hidden="true"><g fill="none" stroke="#fe0b06" stroke-width="4" stroke-linecap="round"><path d="M272 163 8 11M27 10 6 10l12 19"/><path d="M337 201 506 48M484 56l23-10-8 23"/></g></svg>

<div class="watermark">
  <svg viewBox="0 0 46 48"><g fill="none" stroke="#cfd6e2" stroke-width="4" stroke-linecap="round" stroke-linejoin="round"><path d="M10 38V8c0-4 3-6 7-4l21 12c7 5 7 12 0 17L20 45C12 50 2 46 2 38V10"/><path d="M10 34c0 5 4 6 6 3"/></g><path d="m18 18 9 6-9 6z" fill="#cfd6e2"/><path d="M31 19v10" stroke="#cfd6e2" stroke-width="2"/></svg>
  <div class="wm-text"><strong class="wm-name">溜溜自学</strong><span class="wm-url">zixue.3D66.COM</span></div>
</div>
</body>
</html>
```
FILE: styles.css
```css
:root {
  --bg: #444;
  --text: #d2d2d2;
  --cjk: "Noto Sans", "Noto Sans CJK SC", sans-serif;
}
* { box-sizing: border-box; }
html, body { margin: 0; }
body {
  position: relative;
  display: flex;
  flex-direction: column;
  min-height: 100vh;
  overflow-x: hidden;
  background: var(--bg);
  color: var(--text);
  font: 12px/16px var(--cjk);
}
button, input, select { margin: 0; padding: 0; border: 0; border-radius: 0; background: none; color: inherit; font: inherit; }
button { white-space: nowrap; }
p, h1, h2, ol { margin: 0; padding: 0; font-size: 12px; font-weight: 400; }
svg { display: block; }
a { color: inherit; text-decoration: none; }
input { min-width: 0; }
.defs { position: absolute; width: 0; height: 0; }

/* drop-down lists */
.pick { position: relative; display: block; height: 20px; border: 2px solid #080808; border-right-width: 1px; border-bottom: 1px solid #999; background: linear-gradient(#f8f8f8, #d2d2d2); color: #000; }
.pick select { display: block; width: 100%; height: 100%; appearance: none; line-height: 17px; }
.pick::after { content: ""; position: absolute; right: 3px; top: 6px; border: 4px solid transparent; border-top-color: #000; border-bottom: 0; pointer-events: none; }

/* header */
.header { display: flex; height: 45px; background: #555; }
.logo { flex: none; width: 40px; height: 41px; border: 1px solid #0c2b2c; background: linear-gradient(135deg, #0e4d4f, #1b8078 55%, #0d5550); }
.header-rows { flex: 1; min-width: 0; }
.titlebar { display: flex; height: 24px; background: #1d62ad; }
.quick { display: flex; align-items: center; padding: 0 1px 0 6px; background: #a6a6a6; }
.quick button, .infocenter button { width: 24px; height: 24px; padding: 3px; }
.quick button svg, .infocenter button svg { width: 18px; height: 18px; }
.drop { width: 12px; height: 24px; display: grid; place-items: center; }
.drop::after { content: ""; border: 2px solid transparent; border-top: 3px solid #444; border-bottom: 0; }
.pick-workspace { width: 130px; height: 23px; border: 1px solid #666; }
.pick-workspace select { padding-left: 3px; }
.pick-workspace::after { top: 10px; right: 5px; border-width: 2px; border-top-color: #444; }
.more { width: 15px; background: #a6a6a6; display: grid; place-content: center; }
.more::before { content: ""; border-top: 1px solid #111; margin-bottom: 2px; }
.more::after { content: ""; border: 4px solid transparent; border-top-color: #111; border-bottom: 0; }
.doc-title {
  flex: 1; text-align: center; white-space: pre; line-height: 24px; color: #0b1420;
  background:
    radial-gradient(ellipse 16px 12px at 11% 80%, #b8433c 0 50%, transparent),
    radial-gradient(ellipse 18px 20px at 9% 70%, #dfe8dc 0 40%, transparent),
    radial-gradient(ellipse 44px 18px at 31% 90%, #e9f3fb 0 40%, transparent),
    radial-gradient(ellipse 50px 20px at 53% 90%, #d5e9ee 0 40%, transparent),
    radial-gradient(ellipse 34px 20px at 72% 90%, #e8f3fb 0 40%, transparent),
    radial-gradient(ellipse 24px 18px at 93% 80%, #f2f8fd 0 50%, transparent),
    linear-gradient(#2467b0, #155aa9);
}
.infocenter { display: flex; align-items: center; background: #a6a6a6; }
.play { width: 14px; display: grid; place-items: center; }
.play::after { content: ""; border: 4px solid transparent; border-left: 5px solid #111; border-right: 0; }
.search { width: 180px; height: 22px; padding: 2px 0 0 3px; background: #f3f3f3; border: 1px solid #777; color: #666; font-style: italic; }
.search::placeholder { color: #666; opacity: 1; }
.infocenter .help { margin-left: 11px; }
.winctl { display: flex; width: 123px; height: 24px; padding: 0 1px 6px 18px; background: radial-gradient(ellipse 24px 18px at 8% 90%, #f4e8ee 0 40%, transparent), radial-gradient(ellipse 26px 10px at 63% 90%, #e2f0e4 0 30%, transparent), #2c5f9e; }
.winctl button { flex: 1; display: grid; place-items: center; border: 1px solid #8fb0d4; border-width: 0 1px 1px 0; background: linear-gradient(#5584ba, #3a6aa4); }
.winctl .close { flex: 2; }
.winctl svg { width: 16px; height: 14px; }
.menubar { display: flex; height: 21px; padding-left: 1px; background: linear-gradient(#919191, #636363 60%, #515151); color: #f2f2f2; line-height: 22px; }
.menubar a { padding: 0 13px; white-space: nowrap; }
.menubar .tight { padding: 0 7px; }

/* main toolbar */
.toolrow { height: 39px; border-bottom: 1px solid #181818; }
.toolbar { display: flex; width: fit-content; height: 38px; padding: 3px 10px 0 5px; border-left: 3px double #161616; border-right: 1px solid #111; border-top: 1px solid #333; }
.tool { flex: none; width: 32px; height: 30px; padding: 2px 3px; }
.tool-on { background: #3f7fd8; border: 1px solid #0d0d0d; padding: 1px 2px; }
.tool svg { width: 26px; height: 26px; overflow: visible; }
.sep { width: 6px; display: grid; place-items: center; height: 30px; }
.sep::after { content: ""; width: 1px; height: 16px; background: #0c0c0c; }
.t-abc { font: 700 7px "Liberation Sans", sans-serif; fill: #fff; }
.t-snap { font: 17px "Noto Sans", sans-serif; fill: #eee; }
.t-pct { font-size: 15px; }
.toolbar .pick { margin-top: 1px; }
.pick-small { width: 70px; }
.pick-set { width: 120px; border: 1px solid #e6e6e6; background: linear-gradient(270deg, #f4f4f4 14px, #4c4c4c 0); }

/* ribbon */
.ribbon { height: 41px; border-left: 5px double #1a1a1a; }
.ribbon-tabs { display: flex; height: 21px; padding: 2px 0 0 9px; background: #505050; border-bottom: 1px solid #3a3a3a; border-top: 1px solid #5e5e5e; }
.rtab { width: 112px; margin-right: -1px; color: #a2a2a2; text-align: center; line-height: 18px; }
.rtab-on { width: 152px; margin-right: -5px; background: linear-gradient(#6e6e6e, #565656); color: #dadada; border: 1px solid #383838; border-bottom: 0; line-height: 17px; }
.rtab-short { width: 66px; }
.rmin { width: 26px; margin-left: 17px; }
.rmin svg { width: 26px; height: 10px; }
.ribbon-panel { height: 20px; padding-left: 7px; background: linear-gradient(#404040, #3a3a3a); }
.rpanel { width: 69px; height: 19px; border: 1px solid #5b5b5b; border-top: 0; background: #484848; line-height: 18px; }

/* work area */
.main { flex: 1; display: flex; }
.work { flex: 1; min-width: 0; display: flex; flex-direction: column; }
.viewport { position: relative; flex: 1; border: 2px solid #74672f; background: #393939; overflow: hidden; }
.scene { position: absolute; inset: 0; width: 100%; height: 100%; }
.t-axis { font: 11px "DejaVu Sans", sans-serif; }
.vlabel { position: absolute; left: 4px; top: 3px; display: flex; gap: 2px; line-height: 16px; color: #e0e0e0; }
.vlabel .dim { color: #b4b4b4; }
.cube { position: absolute; right: 18px; top: 38px; width: 78px; height: 38px; }
.slider { display: flex; height: 19px; border-bottom: 1px solid #3a3a3a; font-size: 11px; }
.step { width: 16px; height: 18px; line-height: 16px; border-right: 1px solid #111; border-bottom: 1px solid #111; }
.thumb { width: 125px; height: 18px; line-height: 16px; border: 1px solid #111; border-width: 0 2px 2px 1px; }
.track { display: flex; height: 26px; border-top: 1px solid #111; background: #292929; }
.mini { position: relative; z-index: 1; flex: none; width: 49px; background: var(--bg); padding: 3px 0 0 12px; }
.mini svg { width: 18px; height: 18px; }
.frames { flex: 1; display: grid; grid-template-columns: repeat(21, 1fr); margin: 0 32px 0 -20px; list-style: none; font-size: 11px; }
.frames li { padding-top: 11px; line-height: 15px; text-align: center; background: linear-gradient(90deg, transparent calc(50% - 1px), #6e6e6e 0 50%, transparent 0) 0 0 / 20% 12px repeat-x; }
.frames .now { color: #d5d13a; background: linear-gradient(90deg, transparent calc(50% - 4px), #85822a 0 calc(50% + 3px), transparent 0), linear-gradient(90deg, transparent calc(50% - 1px), #6e6e6e 0 50%, transparent 0) 0 0 / 20% 12px repeat-x; }

/* command panel */
.panel { flex: none; width: 182px; padding: 2px 7px 0 0; border-left: 2px solid #353535; display: flex; flex-direction: column; }
.ptabs { display: flex; height: 26px; border-bottom: 1px solid #383838; }
.ptab { width: 29px; padding: 1px 3px 0 4px; border-right: 1px solid #111; border-top: 1px solid #222; }
.ptab-on { width: 27px; border-top: 0; padding-left: 2px; }
.ptab svg { width: 20px; height: 20px; }
.cats { display: flex; padding: 7px 0 0 8px; }
.cat { width: 24px; height: 23px; padding: 3px; }
.cat-on { width: 23px; margin-right: 1px; background: #3f7fd8; border: 1px solid #111; padding: 2px; }
.cat svg { width: 18px; height: 18px; }
.pick-kind { width: 164px; height: 20px; margin: 8px 0 0 8px; }
.pick-kind select { padding-left: 1px; }
.rolls { flex: 1; margin-top: 8px; padding: 3px 3px 4px 5px; border: 1px solid #222; border-right: 1px solid #383838; border-bottom: 0; }
.roll { border: 1px solid #161616; border-top: 0; }
.roll + .roll { margin-top: 8px; }
.roll-head { display: block; width: calc(100% - 4px); height: 17px; margin: 0 2px; border: 1px solid #6a6a6a; line-height: 15px; color: #f0f0f0; text-align: center; }
.roll-head b { float: left; width: 11px; margin-right: -11px; }
.roll-closed { border-bottom: 0; }
.roll-closed + .roll { margin-top: 3px; }
.check { display: flex; align-items: center; gap: 6px; height: 19px; }
.check input { appearance: none; width: 12px; height: 12px; border: 2px solid #181818; border-right: 1px solid #555; border-bottom: 1px solid #555; background: #494949; }
.check input:checked { display: grid; place-items: center; }
.check input:checked::after { content: ""; width: 8px; height: 4px; border: solid #fff; border-width: 0 0 2px 2px; transform: rotate(-45deg); margin-top: -2px; }
.auto { padding-left: 34px; gap: 7px; }
.kinds { display: grid; grid-template-columns: 1fr 1fr; gap: 3px; padding: 0 0 2px 1px; }
.kinds button { height: 18px; line-height: 17px; border: 1px solid #151515; border-width: 0 1px 1px 0; border-top: 1px solid #4f4f4f; }
.kinds .kind-on { background: #3d7cd4; border: 1px solid #151515; color: #e6eefc; }
.field { height: 19px; border: 2px solid #1a1a1a; border-right: 1px solid #505050; border-bottom: 1px solid #505050; background: #585858; font-size: 11px; line-height: 14px; padding-left: 1px; color: #dcdcdc; }
.name-row { display: flex; gap: 4px; padding: 6px 4px 7px 6px; }
.name-row .field { flex: 1; }
.swatch { width: 17px; height: 19px; background: #9ed45c; border: 1px solid #333; }
.radios { display: flex; padding: 1px 0 0 13px; gap: 39px; height: 24px; }
.radios label { display: flex; align-items: center; gap: 7px; }
.radios input { appearance: none; width: 10px; height: 10px; border: 2px solid #171717; border-right-color: #555; border-bottom-color: #555; border-radius: 5px; }
.radios input:checked { background: #e8e8e8; }
.params { display: grid; gap: 2px; padding: 5px 12px 0 0; }
.param { display: flex; align-items: center; justify-content: flex-end; height: 19px; }
.param-gap { margin-top: 12px; }
.param label { margin-right: 2px; }
.param .field { width: 54px; height: 17px; }
.spin { width: 11px; height: 17px; margin-left: 3px; border-right: 1px solid #1a1a1a; border-bottom: 1px solid #1a1a1a; }
.spin svg { width: 9px; height: 16px; }
.group { display: grid; gap: 2px; margin: 12px 4px 0 5px; padding: 0 7px 7px 0; border: 1px solid #161616; }
.group-title { width: max-content; height: 14px; margin: -6px 0 0 6px; padding: 0 2px; line-height: 14px; background: var(--bg); }
.total { display: flex; height: 22px; padding: 3px 0 0 34px; gap: 2px; }
.total .num { font-size: 11px; }
.checks { padding: 4px 0 8px 9px; }

/* status bar */
.status { display: flex; height: 48px; border-top: 1px solid #191919; overflow: hidden; }
.listener { flex: none; width: 100px; padding: 3px 2px 0; display: grid; grid-template-rows: 21px 22px; gap: 1px; border-right: 1px solid #222; }
.macro { background: #ddc3c5; border: 1px solid #fff; }
.script { background: #fff; color: #000; border: 2px solid #222; border-right: 1px solid #fff; padding-left: 2px; font-family: "Liberation Mono", "Noto Sans CJK SC", monospace; }
.info { flex: 1; padding: 4px 3px 0 7px; display: grid; grid-template-rows: 22px 22px; gap: 2px; }
.info-row { display: flex; align-items: center; }
.cell { height: 22px; padding-left: 5px; border: 1px solid #1c1c1c; border-right-color: #555; border-bottom-color: #555; line-height: 21px; white-space: nowrap; overflow: hidden; }
.grow { flex: 1; }
.side { width: 100px; margin-left: 14px; }
.iso + .side { margin-left: 3px; }
.sicon { width: 18px; height: 18px; margin: 0 4px; }
.sicon svg { width: 18px; height: 18px; }
.coord { display: flex; align-items: center; gap: 2px; margin-left: 4px; font-size: 11px; }
.coord + .coord { margin-left: 14px; }
.coord .field { width: 57px; height: 20px; }
.iso { width: 22px; height: 22px; padding: 2px; border: 1px solid #111; background: #3f7fd8; }
.key { width: 43px; border-right: 1px solid #222; border-left: 1px solid #222; padding: 3px 6px 0; }
.key svg { width: 28px; height: 14px; }
.keys { display: grid; grid-template-columns: 66px 111px; grid-template-rows: 21px 21px; gap: 1px 4px; padding: 4px 0 0 3px; }
.kbtn { height: 21px; border: 1px solid #161616; border-width: 0 1px 1px 0; line-height: 20px; text-align: center; }
.kfilter { display: flex; }
.kfilter svg { flex: none; width: 22px; height: 18px; }
.kfilter .kbtn { flex: 1; }
.play-ctl { display: flex; align-items: center; padding: 26px 0 0 12px; }
.play-ctl .field { width: 62px; }
.play-ctl .sicon { margin: 0; }
.play-ctl .sicon:first-child { margin-right: 8px; }
.play-ctl .spin { margin-right: 4px; }
.nav { display: grid; grid-template-columns: repeat(3, 23px); grid-template-rows: 22px 22px; padding: 4px 4px 0 5px; }
.nav .sicon { margin: 0 2px; }

/* annotations and overlay mark */
.marks { position: absolute; right: 0; top: 452px; width: 320px; height: 300px; pointer-events: none; }
.arrows { position: absolute; right: 143px; top: 539px; width: 520px; height: 210px; pointer-events: none; }
.watermark { position: absolute; right: 71px; bottom: 24px; display: flex; align-items: center; gap: 17px; width: 235px; height: 116px; padding-left: 14px; background: #222f55; color: #cfd6e2; }
.watermark svg { width: 47px; height: 48px; }
.wm-text { padding-bottom: 4px; }
.wm-name { display: block; font: 700 36px/36px "Noto Sans CJK SC", sans-serif; white-space: nowrap; }
.wm-url { display: block; padding-top: 3px; font: 17px/20px "DejaVu Sans", sans-serif; }
```
